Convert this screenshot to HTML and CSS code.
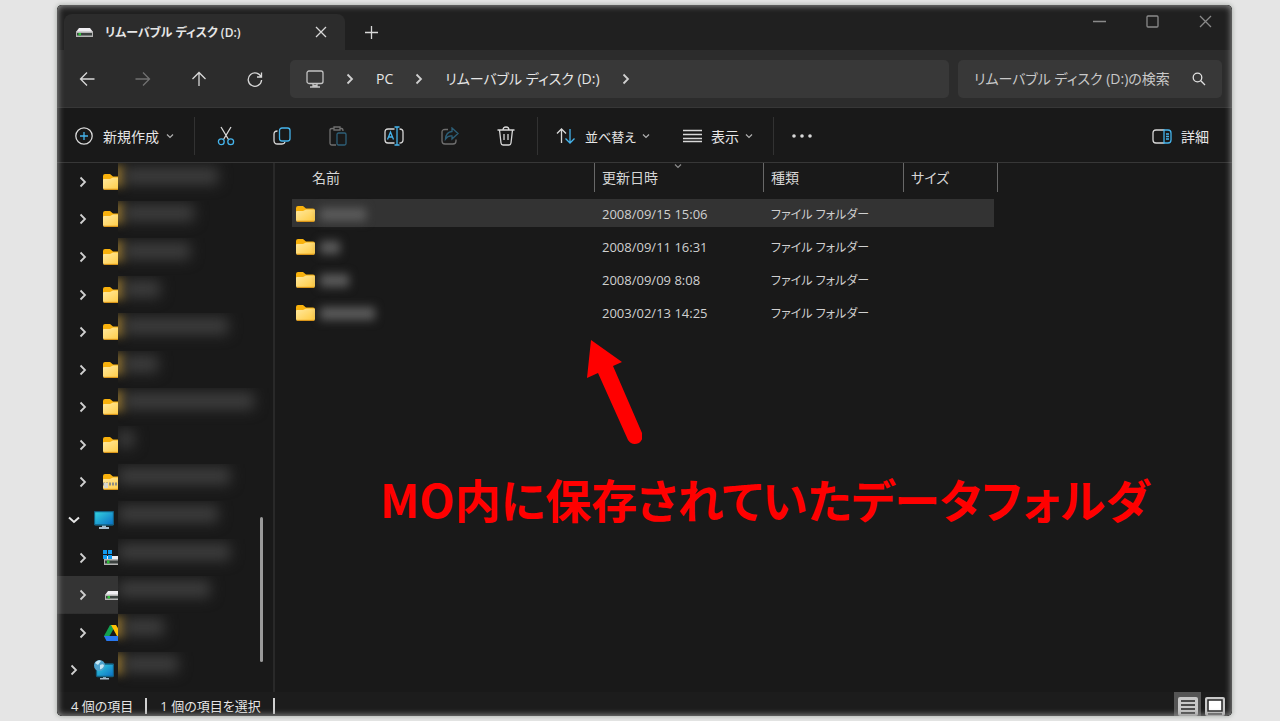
FILE: index.html
```html
<!DOCTYPE html>
<html lang="ja">
  <head>
    <meta charset="UTF-8" />
    <meta name="viewport" content="width=device-width, initial-scale=1.0" />
    <title>リムーバブル ディスク (D:)</title>
    <link rel="stylesheet" href="styles.css">
  </head>
  <body>
    <!-- shared icons -->
    <svg class="defs" width="0" height="0" aria-hidden="true">
      <defs>
        <linearGradient id="gold" x1="0" y1="0" x2="1" y2="1">
          <stop offset="0" stop-color="#ffe9a0" />
          <stop offset="1" stop-color="#ffc93c" />
        </linearGradient>
        <linearGradient id="screen" x1="0" y1="0" x2="1" y2="1">
          <stop offset="0" stop-color="#35d6e0" />
          <stop offset="1" stop-color="#0a6cc4" />
        </linearGradient>
      </defs>
      <symbol id="folder" viewBox="0 0 19 16">
        <path d="M0 2Q0 0 2 0H7L10 2.500H17Q19 2.500 19 4.500V8H0Z" fill="#f8b10c" />
        <path d="M0 6Q0 5 1 5H7L10 3.500H18Q19 3.500 19 5V14Q19 16 17 16H2Q0 16 0 14Z" fill="url(#gold)" />
        <path d="M1 15.500H18" stroke="#d9951a" />
      </symbol>
      <symbol id="drive" viewBox="0 0 17 10">
        <path d="M3 1H14L17 5H0Z" fill="#f0eef2" />
        <path d="M0 4.500H17V10H0Z" fill="#b4b4b4" />
        <path d="M1 6H16V8.500H1Z" fill="#3c4240" />
        <path d="M2.500 6H5V8.500H2.500Z" fill="#2fc23a" />
      </symbol>
      <symbol id="monitor" viewBox="0 0 20 18">
        <path d="M8 13H12V16H15V18H5V16H8Z" fill="#a9bccb" />
        <rect x="0.500" y="0.500" width="19" height="13.500" rx="1" fill="url(#screen)" stroke="#135f80" />
      </symbol>
      <symbol id="chev" viewBox="0 0 8 12">
        <path d="M1.500 1.500L6 6L1.500 10.500" fill="none" stroke="currentColor" stroke-width="1.800" />
      </symbol>
      <symbol id="down" viewBox="0 0 8 6">
        <path d="M1 1.500L4 4.500L7 1.500" fill="none" stroke="currentColor" stroke-width="1.200" />
      </symbol>
    </svg>

    <main class="window">
      <header class="titlebar">
        <div class="tab">
          <svg class="tab-icon" width="17" height="10"><use href="#drive" /></svg>
          <span class="tab-title">リムーバブル ディスク (D:)</span>
          <button class="tab-close" aria-label="タブを閉じる">
            <svg width="12" height="12" viewBox="0 0 12 12"><path d="M1 1L11 11M11 1L1 11" /></svg>
          </button>
        </div>
        <button class="tab-new" aria-label="新しいタブ">
          <svg width="13" height="13" viewBox="0 0 13 13"><path d="M6.500 0V13M0 6.500H13" /></svg>
        </button>
        <div class="caption-buttons">
          <button aria-label="最小化"><svg width="13" height="13" viewBox="0 0 13 13"><path d="M0 6.500H13" /></svg></button>
          <button aria-label="最大化"><svg width="13" height="13" viewBox="0 0 13 13"><rect x="1" y="1" width="11" height="11" rx="1" /></svg></button>
          <button aria-label="閉じる"><svg width="13" height="13" viewBox="0 0 13 13"><path d="M1 1L12 12M12 1L1 12" /></svg></button>
        </div>
      </header>

      <div class="navbar">
        <div class="nav-buttons">
          <button aria-label="戻る"><svg width="16" height="16" viewBox="0 0 16 16"><path d="M15.500 8H1.500M8 1.500L1.500 8L8 14.500" /></svg></button>
          <button aria-label="進む" disabled><svg width="16" height="16" viewBox="0 0 16 16"><path d="M0.500 8H14.500M8 1.500L14.500 8L8 14.500" /></svg></button>
          <button aria-label="上へ"><svg width="16" height="16" viewBox="0 0 16 16"><path d="M8 15V1.500M1.500 8L8 1.500L14.500 8" /></svg></button>
          <button aria-label="更新"><svg width="16" height="16" viewBox="0 0 16 16"><path d="M14.300 6.500A6.700 6.700 0 1 0 14.600 9M14.500 1.500V6H10" /></svg></button>
        </div>
        <nav class="address" aria-label="アドレス">
          <svg class="address-pc" width="18" height="18" viewBox="0 0 18 18">
            <rect x="1" y="1" width="16" height="12.500" rx="2" />
            <path d="M7 14V17M11 14V17M4 17H14M7 15.500H11" />
          </svg>
          <svg class="sep" width="8" height="12"><use href="#chev" /></svg>
          <a href="#pc">PC</a>
          <svg class="sep" width="8" height="12"><use href="#chev" /></svg>
          <a href="#d">リムーバブル ディスク (D:)</a>
          <svg class="sep" width="8" height="12"><use href="#chev" /></svg>
        </nav>
        <div class="search">
          <input type="text" aria-label="検索" placeholder="リムーバブル ディスク (D:)の検索" />
          <svg width="14" height="14" viewBox="0 0 14 14"><circle cx="5.500" cy="5.500" r="4.300" /><path d="M8.800 8.800L13 13" /></svg>
        </div>
      </div>

      <div class="toolbar">
        <button class="tool tool-new">
          <svg width="18" height="18" viewBox="0 0 18 18"><circle cx="9" cy="9" r="8.200" /><path class="blue" d="M9 5V13M5 9H13" /></svg>
          <span>新規作成</span>
          <svg class="down" width="8" height="6"><use href="#down" /></svg>
        </button>
        <div class="tool-icons">
          <button aria-label="切り取り">
            <svg width="18" height="20" viewBox="0 0 18 20"><path d="M4 1L11.500 13.500M14 1L6.500 13.500" /><circle class="blue" cx="4.300" cy="15.800" r="2.900" /><circle class="blue" cx="13.700" cy="15.800" r="2.900" /></svg>
          </button>
          <button aria-label="コピー">
            <svg width="18" height="18" viewBox="0 0 18 18"><path d="M4.500 4Q1 4 1 7V13.500Q1 17 4.500 17H9Q11.500 17 12 15" /><rect class="blue" x="6.500" y="1" width="10.500" height="13" rx="2.500" /></svg>
          </button>
          <button aria-label="貼り付け" disabled>
            <svg width="18" height="20" viewBox="0 0 18 20"><path d="M7 19H3Q1 19 1 17V4Q1 2.500 3 2.500H5M11 2.500H12.500Q14 2.500 14 5M5 1H11V4H5Z" /><rect class="blue" x="8" y="7" width="9" height="12" rx="1.500" /></svg>
          </button>
          <button aria-label="名前の変更">
            <svg width="20" height="20" viewBox="0 0 20 20"><path d="M10.500 3H4Q1 3 1 6V14Q1 17 4 17H10.500M15.500 3Q19 3 19 6V14Q19 17 15.500 17" /><path class="blue" d="M13 1V19M10.500 1H15.500M10.500 19H15.500M3.500 13.500L6.500 6L9.500 13.500M4.500 11H8.500" /></svg>
          </button>
          <button aria-label="共有" disabled>
            <svg width="18" height="18" viewBox="0 0 18 18"><path d="M7 2.500H4Q1 2.500 1 5V14Q1 17 4 17H12Q15 17 15 14V12.500" /><path class="blue" d="M11 1L17 6.500L11 12V9Q7 8.500 4.500 12Q5 5 11 4.500Z" /></svg>
          </button>
          <button aria-label="削除">
            <svg width="18" height="20" viewBox="0 0 18 20"><path d="M0.500 4H17.500M6 4Q6 1 9 1Q12 1 12 4M2.500 4L4 17Q4.300 19 6 19H12Q13.700 19 14 17L15.500 4M7 8V14M11 8V14" /></svg>
          </button>
        </div>
        <button class="tool tool-sort">
          <svg width="20" height="16" viewBox="0 0 20 16"><path d="M5.500 15V1M1 5.500L5.500 1L10 5.500" /><path class="blue" d="M14 1V15M9.500 10.500L14 15L18.500 10.500" /></svg>
          <span>並べ替え</span>
          <svg class="down" width="8" height="6"><use href="#down" /></svg>
        </button>
        <button class="tool tool-view">
          <svg width="19" height="14" viewBox="0 0 19 14"><path d="M0 1.500H19M0 5.500H19M0 9.500H19M0 12.500H19" /></svg>
          <span>表示</span>
          <svg class="down" width="8" height="6"><use href="#down" /></svg>
        </button>
        <button class="tool tool-more" aria-label="もっと見る">
          <svg width="20" height="4" viewBox="0 0 20 4"><path d="M2 2H2.010M10 2H10.010M18 2H18.010" /></svg>
        </button>
        <button class="tool tool-detail">
          <svg width="20" height="15" viewBox="0 0 20 15"><path d="M12.500 1H4Q1 1 1 4V11Q1 14 4 14H12.500" /><path class="blue" d="M12 1H16Q19 1 19 4V11Q19 14 16 14H12ZM14 5H17M14 7.500H17M14 10H17" /></svg>
          <span>詳細</span>
        </button>
      </div>

      <div class="content">
        <aside class="sidebar">
          <ul class="tree">
            <li><svg class="arrow"><use href="#chev" /></svg><span class="pic"><svg width="19" height="16"><use href="#folder" /></svg></span><span class="hidden-name gold"><i style="width: 94px"></i></span></li>
            <li><svg class="arrow"><use href="#chev" /></svg><span class="pic"><svg width="19" height="16"><use href="#folder" /></svg></span><span class="hidden-name gold"><i style="width: 70px"></i></span></li>
            <li><svg class="arrow"><use href="#chev" /></svg><span class="pic"><svg width="19" height="16"><use href="#folder" /></svg></span><span class="hidden-name gold"><i style="width: 66px"></i></span></li>
            <li><svg class="arrow"><use href="#chev" /></svg><span class="pic"><svg width="19" height="16"><use href="#folder" /></svg></span><span class="hidden-name gold"><i style="width: 36px"></i></span></li>
            <li><svg class="arrow"><use href="#chev" /></svg><span class="pic"><svg width="19" height="16"><use href="#folder" /></svg></span><span class="hidden-name gold"><i style="width: 104px"></i></span></li>
            <li><svg class="arrow"><use href="#chev" /></svg><span class="pic"><svg width="19" height="16"><use href="#folder" /></svg></span><span class="hidden-name gold"><i style="width: 34px"></i></span></li>
            <li><svg class="arrow"><use href="#chev" /></svg><span class="pic"><svg width="19" height="16"><use href="#folder" /></svg></span><span class="hidden-name gold"><i style="width: 130px"></i></span></li>
            <li><svg class="arrow"><use href="#chev" /></svg><span class="pic"><svg width="19" height="16"><use href="#folder" /></svg></span><span class="hidden-name"><i style="width: 16px"></i></span></li>
            <li><svg class="arrow"><use href="#chev" /></svg><span class="pic"><svg width="19" height="16" viewBox="0 0 19 16"><use href="#folder" /><path d="M0 10H19" stroke="#8d8d86" stroke-width="3" stroke-dasharray="2 1" /><path d="M1 9H5V14H1Z" fill="#d5d5cc" /></svg></span><span class="hidden-name"><i style="width: 112px"></i></span></li>
            <li class="root"><svg class="open" width="12" height="8" viewBox="0 0 12 8"><path d="M1 1.500L6 6L11 1.500" /></svg><span class="pic"><svg width="20" height="18"><use href="#monitor" /></svg></span><span class="hidden-name"><i style="width: 100px"></i></span></li>
            <li><svg class="arrow"><use href="#chev" /></svg><span class="pic"><svg width="19" height="16" viewBox="0 0 19 16"><path d="M3 6H19V10H1Z" fill="#f0eef2" /><path d="M1 9H19V15H1Z" fill="#b4b4b4" /><path d="M2 10.500H19V13.500H2Z" fill="#3c4240" /><path d="M4 10.500H6.500V13.500H4Z" fill="#2fc23a" /><path d="M0 0H4V4H0ZM5 0H9V4H5ZM0 5H4V9H0ZM5 5H9V9H5Z" fill="#129bf0" /></svg></span><span class="hidden-name"><i style="width: 112px"></i></span></li>
            <li class="current"><svg class="arrow"><use href="#chev" /></svg><span class="pic"><svg class="disk" width="17" height="10"><use href="#drive" /></svg></span><span class="hidden-name"><i style="width: 92px"></i></span></li>
            <li><svg class="arrow"><use href="#chev" /></svg><span class="pic"><svg width="20" height="16" viewBox="0 0 20 16"><path d="M7 0H13L4 15L1 11Z" fill="#12a150" /><path d="M8 0H13L20 11H14Z" fill="#ffc107" /><path d="M4.500 11H20L17 16H3.500L1 11Z" fill="#2878f0" /></svg></span><span class="hidden-name gold"><i style="width: 40px"></i></span></li>
            <li class="root"><svg class="arrow"><use href="#chev" /></svg><span class="pic"><svg width="20" height="20" viewBox="0 0 20 20"><path d="M9 16H12V18H15V19.500H6V18H9Z" fill="#a9bccb" /><rect x="2.500" y="4" width="17" height="12.500" rx="1" fill="url(#screen)" stroke="#135f80" /><circle cx="5.500" cy="5.500" r="5.500" fill="#4fa3cd" /><path d="M1 3Q4 -1 7 1L4 5ZM6 5Q10 3 10 6Q8 10 6 9Z" fill="#c4e6f4" /></svg></span><span class="hidden-name gold"><i style="width: 54px"></i></span></li>
          </ul>
          <div class="scrollbar"></div>
        </aside>

        <section class="files">
          <table class="list">
            <colgroup>
              <col class="col-name" />
              <col class="col-date" />
              <col class="col-type" />
              <col class="col-size" />
            </colgroup>
            <thead>
              <tr>
                <th>名前</th>
                <th class="sorted">更新日時<svg width="10" height="6"><use href="#down" /></svg></th>
                <th>種類</th>
                <th>サイズ</th>
              </tr>
            </thead>
            <tbody>
              <tr class="selected">
                <td><div class="name"><svg width="19" height="16"><use href="#folder" /></svg><i style="width: 46px"></i></div></td>
                <td>2008/09/15 15:06</td>
                <td class="type">ファイル フォルダー</td>
                <td></td>
              </tr>
              <tr>
                <td><div class="name"><svg width="19" height="16"><use href="#folder" /></svg><i style="width: 20px"></i></div></td>
                <td>2008/09/11 16:31</td>
                <td class="type">ファイル フォルダー</td>
                <td></td>
              </tr>
              <tr>
                <td><div class="name"><svg width="19" height="16"><use href="#folder" /></svg><i style="width: 29px"></i></div></td>
                <td>2008/09/09 8:08</td>
                <td class="type">ファイル フォルダー</td>
                <td></td>
              </tr>
              <tr>
                <td><div class="name"><svg width="19" height="16"><use href="#folder" /></svg><i style="width: 55px"></i></div></td>
                <td>2003/02/13 14:25</td>
                <td class="type">ファイル フォルダー</td>
                <td></td>
              </tr>
            </tbody>
          </table>
          <div class="note">
            <svg width="56" height="104" viewBox="0 0 56 104"><path d="M5 0L36 22L27 26L56 93Q58 99 53 103Q46 106 42 100L12 33L1 38Z" fill="#f00" /></svg>
            <p>MO内に保存されていたデータフォルダ</p>
          </div>
        </section>
      </div>

      <footer class="status">
        <span class="status-count">4 個の項目</span>
        <span class="status-selected">1 個の項目を選択</span>
        <div class="view-switch">
          <button class="on" aria-label="詳細表示"><svg width="20" height="19" viewBox="0 0 20 19"><rect width="20" height="19" rx="2" fill="#c8c8c8" /><path d="M3 4H17M3 8H17M3 12H17M3 16H17" stroke="#222" stroke-width="1.500" /></svg></button>
          <button aria-label="大アイコン"><svg width="20" height="19" viewBox="0 0 20 19"><rect width="20" height="19" rx="2" fill="#c8c8c8" /><rect x="3" y="3" width="14" height="11" fill="#fff" stroke="#222" stroke-width="1.500" /><path d="M3 17H17" stroke="#444" /></svg></button>
        </div>
      </footer>
    </main>
  </body>
</html>
```
FILE: styles.css
```css
* {
  box-sizing: border-box;
}
body {
  margin: 0;
  min-height: 100vh;
  display: flex;
  padding: 5px 48px 5px 57px;
  background: #e5e5e5;
  color: #e6e6e6;
  font-family: "Open Sans", "Noto Sans CJK JP", sans-serif;
  font-size: 14px;
  font-feature-settings: "palt";
}
button {
  display: flex;
  align-items: center;
  justify-content: center;
  padding: 0;
  border: none;
  background: none;
  color: inherit;
  font: inherit;
  font-feature-settings: inherit;
}
svg {
  flex: none;
  fill: none;
  stroke-width: 1.3px;
}
button svg {
  stroke: #d8d8d8;
}
.defs {
  position: absolute;
}
.window {
  position: relative;
  flex: 1;
  min-width: 0;
  display: flex;
  flex-direction: column;
  background: #191919;
  border-radius: 5px;
  overflow: hidden;
  box-shadow: 0 0 4px 1px #b4b8b4;
}
/* soft light edge round the whole window */
.window::after {
  content: "";
  position: absolute;
  inset: 0;
  border-radius: 5px;
  box-shadow: inset 0 0 6px 1px #8c8c8c;
  pointer-events: none;
}

/* title bar */
.titlebar {
  display: flex;
  align-items: flex-end;
  height: 45px;
  padding-left: 7px;
  background: #202020;
}
.tab {
  display: flex;
  align-items: center;
  width: 281px;
  height: 36px;
  padding: 0 12px;
  background: #2c2c2c;
  border-radius: 8px 8px 0 0;
}
.tab-icon {
  margin-right: 12px;
}
.tab-title {
  flex: 1;
  font-size: 12px;
  font-weight: 600;
  white-space: nowrap;
}
.tab-close {
  width: 24px;
  height: 24px;
}
.tab-new {
  width: 36px;
  height: 36px;
  margin-left: 8px;
}
.caption-buttons {
  display: flex;
  align-self: flex-start;
  margin-left: auto;
}
.caption-buttons button {
  width: 53px;
  height: 32px;
}
.caption-buttons svg {
  stroke: #8a8a8a;
}

/* navigation */
.navbar {
  display: flex;
  align-items: center;
  gap: 9px;
  height: 58px;
  padding-right: 10px;
  background: #2c2c2c;
  border-bottom: 1px solid #373737;
}
.nav-buttons {
  display: flex;
  width: 224px;
  padding-left: 2px;
}
.nav-buttons button {
  flex: none;
  width: 56px;
  height: 40px;
}
.nav-buttons button:disabled {
  opacity: 0.4;
}
.address {
  flex: 1;
  display: flex;
  align-items: center;
  height: 38px;
  padding-left: 16px;
  border-radius: 5px;
  background: #383838;
}
.address a {
  color: inherit;
  line-height: 20px;
  text-decoration: none;
  white-space: nowrap;
}
.address-pc {
  stroke: #c4c4c4;
}
.sep {
  margin: 0 22px;
  color: #d0d0d0;
}
.search {
  display: flex;
  align-items: center;
  width: 264px;
  height: 38px;
  padding: 0 16px;
  border-radius: 5px;
  background: #383838;
}
.search input {
  width: 196px;
  margin-right: 22px;
  padding: 0;
  border: none;
  outline: none;
  background: none;
  color: inherit;
  font: inherit;
  font-feature-settings: inherit;
}
.search input::placeholder {
  color: #c8c8c8;
}
.search svg {
  stroke: #e0e0e0;
}

/* command bar */
.toolbar {
  display: flex;
  align-items: center;
  height: 55px;
  padding-top: 2px;
  border-bottom: 1px solid #373737;
}
.tool {
  height: 38px;
  white-space: nowrap;
}
.tool .down {
  margin-left: 6px;
  stroke: none;
  color: #b0b0b0;
}
.tool-new {
  gap: 10px;
  padding: 0 20px 0 18px;
}
.tool-new .down {
  margin-left: -3px;
}
.tool-icons {
  display: flex;
  height: 38px;
  padding: 0 3px;
  border: solid #323232;
  border-width: 0 1px;
}
.tool-icons button {
  width: 56px;
}
.tool-icons button:disabled {
  opacity: 0.45;
}
button .blue {
  stroke: #45b4ec;
}
.tool-sort {
  padding-left: 18px;
}
.tool-sort span {
  margin-left: 9px;
  font-size: 13px;
}
.tool-view span {
  margin-left: 9px;
}
.tool-view {
  padding: 0 20px 0 33px;
  border-right: 1px solid #323232;
}
.tool-more {
  margin-left: 18px;
}
.tool-more svg {
  stroke-width: 3.6px;
  stroke-linecap: round;
}
.tool-detail {
  gap: 9px;
  margin-left: auto;
  padding-right: 23px;
}

/* folder tree */
.content {
  flex: 1;
  display: flex;
}
.sidebar {
  position: relative;
  width: 218px;
  border-right: 2px solid #292929;
}
.tree {
  display: flex;
  flex-direction: column;
  height: 100%;
  margin: 0;
  padding: 0 0 3px;
  list-style: none;
}
.tree li {
  flex: 1;
  display: flex;
  align-items: center;
  padding-left: 22px;
}
.tree .root {
  padding-left: 11px;
}
.tree .current {
  background: linear-gradient(#343434, #343434) left / 61px 100% no-repeat;
}
.arrow {
  width: 8px;
  height: 12px;
  margin-right: 16px;
  color: #d0d0d0;
}
.root .arrow {
  margin: 0 16px 0 2px;
}
.open {
  margin-right: 14px;
  stroke: #e6e6e6;
  stroke-width: 2px;
}
.pic {
  display: flex;
  flex: none;
  width: 15px;
  overflow: hidden;
}
.root .pic {
  width: 24px;
}
.disk {
  margin-left: 2px;
}
.hidden-name {
  display: flex;
  align-items: center;
  align-self: stretch;
  flex: 1;
  padding-bottom: 12px;
  overflow: hidden;
}
.hidden-name i {
  height: 16px;
  background: #404040;
  filter: blur(7px);
}
.gold::before {
  content: "";
  width: 12px;
  height: 20px;
  margin-left: -6px;
  background: #96752c;
  filter: blur(5px);
}
.scrollbar {
  position: absolute;
  right: 10px;
  bottom: 30px;
  width: 3px;
  height: 145px;
  border-radius: 2px;
  background: #9a9a9a;
}

/* file list */
.files {
  position: relative;
  flex: 1;
  padding-left: 17px;
}
.list {
  width: 706px;
  table-layout: fixed;
  border-collapse: separate;
  border-spacing: 0;
}
.col-name {
  width: 302px;
}
.col-date {
  width: 169px;
}
.col-type {
  width: 140px;
}
.list th {
  position: relative;
  height: 34px;
  padding: 0 0 6px 8px;
  background: linear-gradient(#686868, #686868) left top / 1px 29px no-repeat;
  color: #d6d6d6;
  font-weight: 400;
  text-align: left;
}
.list th:first-child {
  padding-left: 20px;
  background: none;
}
.list th:last-child {
  background: linear-gradient(#686868, #686868) left top / 1px 29px no-repeat,
    linear-gradient(#686868, #686868) right top / 1px 29px no-repeat;
}
.sorted svg {
  position: absolute;
  right: 80px;
  top: 0;
  color: #8c8c8c;
}
.list td {
  height: 33px;
  padding: 2px 0 0 8px;
  border: solid transparent;
  border-width: 2px 0 3px;
  background-clip: padding-box;
  color: #d0d0d0;
  font-size: 13px;
  line-height: 20px;
}
.list td:first-child {
  padding-left: 4px;
}
.list td:last-child {
  border-right-width: 4px;
}
.list .type {
  padding-top: 4px;
  font-size: 12px;
}
.selected td {
  background-color: #333;
}
.name {
  display: flex;
  align-items: center;
  gap: 5px;
}
.name i {
  height: 13px;
  background: #5c5c5c;
  filter: blur(5px);
}

/* red arrow and caption over the list */
.note {
  position: absolute;
  left: 105px;
  top: 177px;
}
.note svg {
  display: block;
  margin-left: 206px;
}
.note p {
  margin: 22px 0 0;
  color: #f00;
  font-family: "Noto Sans CJK JP", sans-serif;
  font-size: 46px;
  font-weight: 700;
  line-height: 64px;
  white-space: nowrap;
}

/* status bar */
.status {
  display: flex;
  align-items: center;
  height: 24px;
  padding: 3px 0 0 14px;
  background: #1c1c1c;
  font-size: 13px;
  line-height: 16px;
}
.status span {
  padding-right: 12px;
  border-right: 2px solid #d0d0d0;
}
.status .status-selected {
  margin-left: 13px;
}
.view-switch {
  display: flex;
  align-self: stretch;
  margin: -3px 0 0 auto;
  padding-right: 4px;
}
.view-switch button {
  width: 27px;
}
.view-switch svg {
  margin-top: 4px;
  stroke: none;
}
.view-switch .on {
  background: #555;
}
```
